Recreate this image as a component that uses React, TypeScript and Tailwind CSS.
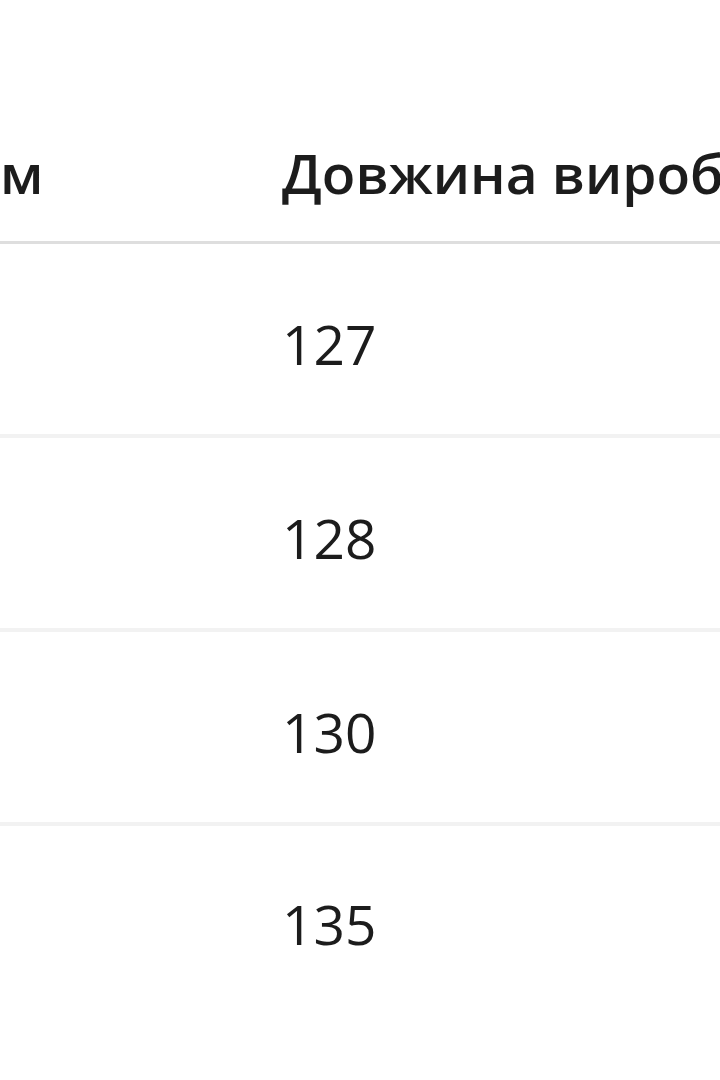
const rows = ["127", "128", "130", "135"];

export default function App() {
  return (
    <div
      className="w-[720px] h-[1080px] overflow-hidden bg-white text-[#1c1c1c]"
      style={{ fontFamily: '"Open Sans", "Noto Sans", sans-serif' }}
    >
      <div className="grid grid-cols-[282px_1fr] h-[244px] border-b-[3px] border-[#dedede] pt-[145px] text-[55px] leading-none font-semibold whitespace-nowrap">
        <div>м</div>
        <div className="overflow-hidden">Довжина виробу, см</div>
      </div>
      {rows.map((value, i) => (
        <div
          key={value}
          className={
            i < rows.length - 1
              ? "grid grid-cols-[282px_1fr] h-[194px] border-b-4 border-[#f2f2f2] pt-[72px] text-[55px] leading-none"
              : "grid grid-cols-[282px_1fr] h-[190px] pt-[70px] text-[55px] leading-none"
          }
        >
          <div></div>
          <div>{value}</div>
        </div>
      ))}
    </div>
  );
}
